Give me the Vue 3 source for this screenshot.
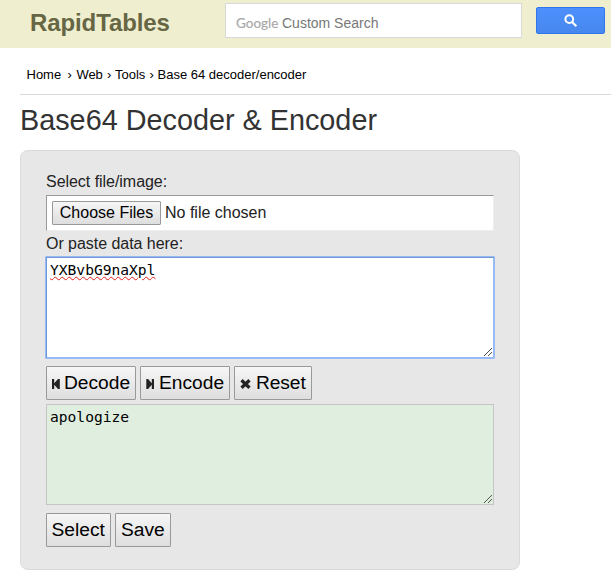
<script setup>
import { ref } from 'vue'
const input = ref('YXBvbG9naXpl')
const output = ref('apologize')
</script>

<template>
  <div class="page">
    <header class="header">
      <a class="brand">RapidTables</a>
      <div class="search"><span class="google">Google</span><span class="custom">Custom Search</span></div>
      <button class="search-btn" aria-label="Search">
        <svg width="14" height="14" viewBox="0 0 14 14"><circle cx="5.3" cy="5.1" r="3.9" fill="none" stroke="#fff" stroke-width="2" /><path d="M8 8 L12.4 12.3" stroke="#fff" stroke-width="2.2" /></svg>
      </button>
    </header>
    <nav class="crumbs">
      <span class="home">Home</span><span class="sep first">›</span><span class="web">Web</span><span class="sep">›</span><span class="tools">Tools</span><span class="sep">›</span><span class="current">Base 64 decoder/encoder</span>
    </nav>
    <h1><span>Base64 Decoder &amp; Encoder</span></h1>
    <main class="panel">
      <div class="label l1"><span>Select file/image:</span></div>
      <div class="file"><button class="choose"><span>Choose Files</span></button><span class="nofile">No file chosen</span></div>
      <div class="label l2"><span>Or paste data here:</span></div>
      <div class="area input">
        <span class="mono misspelled">{{ input }}</span>
        <svg class="grip" width="8" height="8" viewBox="0 0 8 8" shape-rendering="crispEdges"><g fill="#555"><rect v-for="n in 8" :key="n" :x="n - 1" :y="8 - n" width="1" height="1" /><rect v-for="n in 4" :key="'s' + n" :x="n + 3" :y="8 - n" width="1" height="1" /></g></svg>
      </div>
      <div class="buttons top">
        <button class="btn decode"><svg width="9" height="12" viewBox="0 0 9 12"><path d="M0 1h2.200v4.200L6 1h1.800v10H6L2.200 6.800V11H0z" fill="#222" /></svg><span>Decode</span></button>
        <button class="btn encode"><svg width="10" height="12" viewBox="0 0 10 12"><path d="M.3 1h1.800L5.800 5.200V1H8v10H5.800V6.800L2.100 11H.3z" fill="#222" /></svg><span>Encode</span></button>
        <button class="btn reset"><svg width="12" height="12" viewBox="0 0 12 12"><path d="M1.500 2.300 9.500 9.700M9.500 2.300 1.500 9.700" stroke="#222" stroke-width="3.300" /></svg><span>Reset</span></button>
      </div>
      <div class="area output">
        <span class="mono">{{ output }}</span>
        <svg class="grip" width="8" height="8" viewBox="0 0 8 8" shape-rendering="crispEdges"><g fill="#555"><rect v-for="n in 8" :key="n" :x="n - 1" :y="8 - n" width="1" height="1" /><rect v-for="n in 4" :key="'s' + n" :x="n + 3" :y="8 - n" width="1" height="1" /></g></svg>
      </div>
      <div class="buttons bottom">
        <button class="btn select"><span>Select</span></button>
        <button class="btn save"><span>Save</span></button>
      </div>
    </main>
  </div>
</template>

<style>
body { margin: 0; background: #fff; overflow: hidden; }
</style>
<style scoped>
* { box-sizing: border-box; }
.page { width: 611px; height: 580px; font-family: "Liberation Sans", Arial, sans-serif; color: #222; background: #fff; overflow: hidden; }
button { font-family: inherit; padding: 0; margin: 0; white-space: nowrap; }
.header { height: 48px; background: #efeecf; display: flex; align-items: flex-start; padding-left: 30px; }
.brand { width: 195px; font-size: 24px; letter-spacing: -.1px; line-height: 28px; font-weight: bold; color: #666644; padding-top: 9px; }
.search { width: 297px; height: 35px; margin-top: 3px; background: #fff; border: 1px solid #d9d9d9; display: flex; align-items: center; padding: 4px 0 0 10px; white-space: nowrap; }
.google { font-family: Lato, sans-serif; font-size: 13.5px; color: #aaa; width: 46px; -webkit-text-stroke: .2px #aaa; }
.custom { font-size: 14px; color: #777; }
.search-btn { width: 69px; height: 27px; margin: 7px 0 0 14px; border: 1px solid #2f75ee; border-radius: 2px; background: linear-gradient(#4d90fe, #4787ed); display: flex; align-items: center; justify-content: center; }
.crumbs { height: 47px; margin-left: 20px; padding: 6px 0 0 6.5px; border-bottom: 1px solid #dadada; display: flex; align-items: center; font-size: 13px; color: #000; white-space: nowrap; }
.crumbs span { flex: none; }
.home { width: 41px; }
.sep { width: 8px; }
.first { width: 9px; }
.web { width: 30.500px; letter-spacing: -.1px; }
.tools { width: 34.500px; }
h1 { margin: 0 0 0 20px; height: 55px; padding-top: 8px; font-size: 28.8px; line-height: 34px; font-weight: 400; color: #333; }
.panel { margin-left: 20px; width: 500px; height: 420px; background: #e7e7e7; border: 1px solid #dadada; border-radius: 8px; padding: 20px 25px 0; }
.label { font-size: 16px; line-height: 20px; letter-spacing: -.04px; }
.l1 { height: 24px; padding-top: 1px; }
.file { height: 36px; border: 1px solid #ededed; border-top-color: #999; border-left-color: #999; background: #fff; display: flex; align-items: center; padding-left: 5px; font-size: 16px; }
.choose { width: 109px; height: 24px; border: 1px solid #999; border-radius: 1px; background: linear-gradient(#f6f6f6, #dedede); font-size: 16px; color: #000; }
.nofile { margin-left: 4px; }
.l2 { height: 25px; padding-top: 3px; }
.area { position: relative; width: 448px; white-space: nowrap; }
.mono { font-family: "DejaVu Sans Mono", monospace; font-size: 14.6px; line-height: 19px; color: #000; display: inline-block; }
.input { width: 450px; height: 103px; margin-left: -1px; background: #fff; border: 1px solid #97b9f4; box-shadow: inset 1px 1px #7097d8, inset -1px -1px #97b9f4; padding: 3px 0 0 4px; border-radius: 1px; }
.misspelled { text-decoration: underline wavy #e02020 1px; text-underline-offset: 1px; }
.output { height: 101px; background: #dfeedf; border: 1px solid #c5c5c5; padding: 2px 0 0 3px; }
.grip { position: absolute; right: 2px; bottom: 2px; }
.output .grip { right: 1px; bottom: 1px; }
.buttons { display: flex; gap: 4px; }
.top { padding: 7px 0 4px; }
.bottom { padding-top: 8px; }
.btn { height: 34px; border: 1px solid #999; border-radius: 1px; background: linear-gradient(#f6f6f6, #dedede); font-size: 19.2px; color: #000; display: flex; align-items: center; padding-left: 5px; }
.btn svg { flex: none; margin-top: 2px; margin-right: 3px; }
.decode, .encode { width: 90px; }
.reset { width: 78px; }
.reset svg { margin-right: 4px; }
.reset span { letter-spacing: -.1px; }
.select { width: 65px; padding-left: 4.500px; }
.save { width: 56px; }
</style>
